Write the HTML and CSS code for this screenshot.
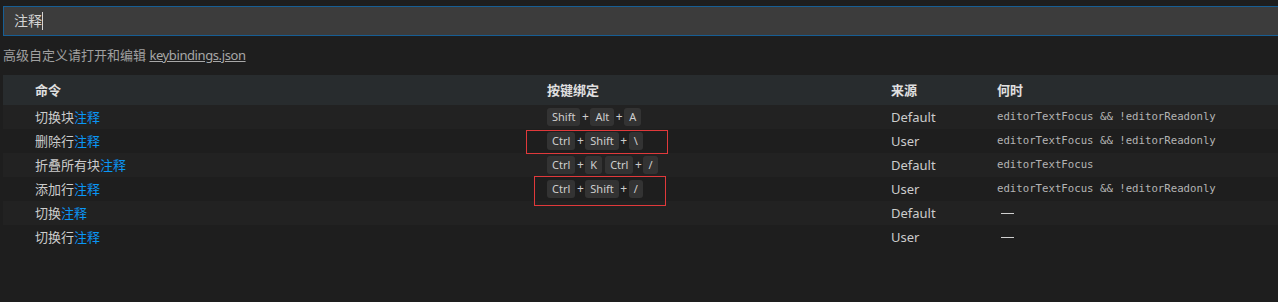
FILE: index.html
```html
<!DOCTYPE html>
<html lang="zh">
<head>
<meta charset="utf-8">
<link rel="stylesheet" href="styles.css">
</head>
<body>
<div class="page">
  <div class="search"><span class="query">注释</span><span class="caret"></span></div>
  <div class="hint">高级自定义请打开和编辑 <a class="link">keybindings.json</a></div>
  <div class="table">
    <div class="row head">
      <div class="c-cmd">命令</div>
      <div class="c-key">按键绑定</div>
      <div class="c-src">来源</div>
      <div class="c-when">何时</div>
    </div>
    <div class="row odd">
      <div class="c-cmd">切换块<span class="hl">注释</span></div>
      <div class="c-key"><span class="k">Shift</span><span class="plus">+</span><span class="k">Alt</span><span class="plus">+</span><span class="k">A</span></div>
      <div class="c-src">Default</div>
      <div class="c-when mono">editorTextFocus &amp;&amp; !editorReadonly</div>
    </div>
    <div class="row">
      <div class="c-cmd">删除行<span class="hl">注释</span></div>
      <div class="c-key"><span class="k">Ctrl</span><span class="plus">+</span><span class="k">Shift</span><span class="plus">+</span><span class="k">\</span><span class="mark m1"></span></div>
      <div class="c-src">User</div>
      <div class="c-when mono">editorTextFocus &amp;&amp; !editorReadonly</div>
    </div>
    <div class="row odd">
      <div class="c-cmd">折叠所有块<span class="hl">注释</span></div>
      <div class="c-key"><span class="k">Ctrl</span><span class="plus">+</span><span class="k">K</span><span class="chord"></span><span class="k">Ctrl</span><span class="plus">+</span><span class="k">/</span></div>
      <div class="c-src">Default</div>
      <div class="c-when mono">editorTextFocus</div>
    </div>
    <div class="row">
      <div class="c-cmd">添加行<span class="hl">注释</span></div>
      <div class="c-key"><span class="k">Ctrl</span><span class="plus">+</span><span class="k">Shift</span><span class="plus">+</span><span class="k">/</span><span class="mark m2"></span></div>
      <div class="c-src">User</div>
      <div class="c-when mono">editorTextFocus &amp;&amp; !editorReadonly</div>
    </div>
    <div class="row odd">
      <div class="c-cmd">切换<span class="hl">注释</span></div>
      <div class="c-key"></div>
      <div class="c-src">Default</div>
      <div class="c-when"><span class="dash"></span></div>
    </div>
    <div class="row">
      <div class="c-cmd">切换行<span class="hl">注释</span></div>
      <div class="c-key"></div>
      <div class="c-src">User</div>
      <div class="c-when"><span class="dash"></span></div>
    </div>
  </div>
</div>
</body>
</html>
```

FILE: styles.css
```css
html, body {
  margin: 0;
  padding: 0;
  background: #1e1e1e;
  height: 100%;
  overflow: hidden;
}
.page {
  padding: 6px 0 0 3px;
  font-family: "Noto Sans", "Noto Sans CJK SC", sans-serif;
  font-size: 13px;
  color: #cccccc;
}
.search {
  height: 28px;
  border: 1px solid #175e94;
  border-right: none;
  background: #3c3c3c;
  display: flex;
  align-items: center;
  padding-left: 10px;
}
.query {
  font-size: 14px;
  color: #d4d4d4;
  line-height: 18px;
}
.caret {
  width: 1px;
  height: 18px;
  background: #d4d4d4;
}
.hint {
  margin-top: 10px;
  height: 19px;
  line-height: 19px;
  color: #a0a0a0;
}
.link {
  color: #a8a8a8;
  text-decoration: underline;
  letter-spacing: -0.4px;
}
.table {
  margin-top: 10px;
}
.row {
  display: grid;
  grid-template-columns: 512px 344px 106px 1fr;
  padding-left: 32px;
  height: 24px;
  line-height: 22px;
  align-items: center;
}
.row.odd {
  background: #222222;
}
.row.head {
  height: 30px;
  line-height: 30px;
  background: #282c2e;
  font-weight: bold;
  color: #e0e0e0;
}
.hl {
  color: #0a97f6;
}
.c-key {
  display: flex;
  align-items: center;
  position: relative;
  height: 24px;
}
.head .c-key {
  height: 30px;
}
.k {
  background: #333333;
  border-radius: 3px;
  height: 18px;
  line-height: 18px;
  padding: 0 5px;
  font-size: 11px;
  color: #cfcfcf;
}
.plus {
  width: 10px;
  text-align: center;
  font-size: 12px;
  line-height: 18px;
  color: #cccccc;
}
.chord {
  width: 3px;
}
.mono {
  font-family: "DejaVu Sans Mono", monospace;
  font-size: 10.7px;
  color: #b4b4b4;
}
.dash {
  display: block;
  width: 13px;
  height: 1px;
  background: #d0d0d0;
  margin-left: 4px;
}
.mark {
  position: absolute;
  border: 1px solid #e0393b;
}
.m1 {
  left: -21px;
  top: 1px;
  width: 140px;
  height: 22px;
}
.m2 {
  left: -13px;
  top: -1px;
  width: 130px;
  height: 28px;
}
```
